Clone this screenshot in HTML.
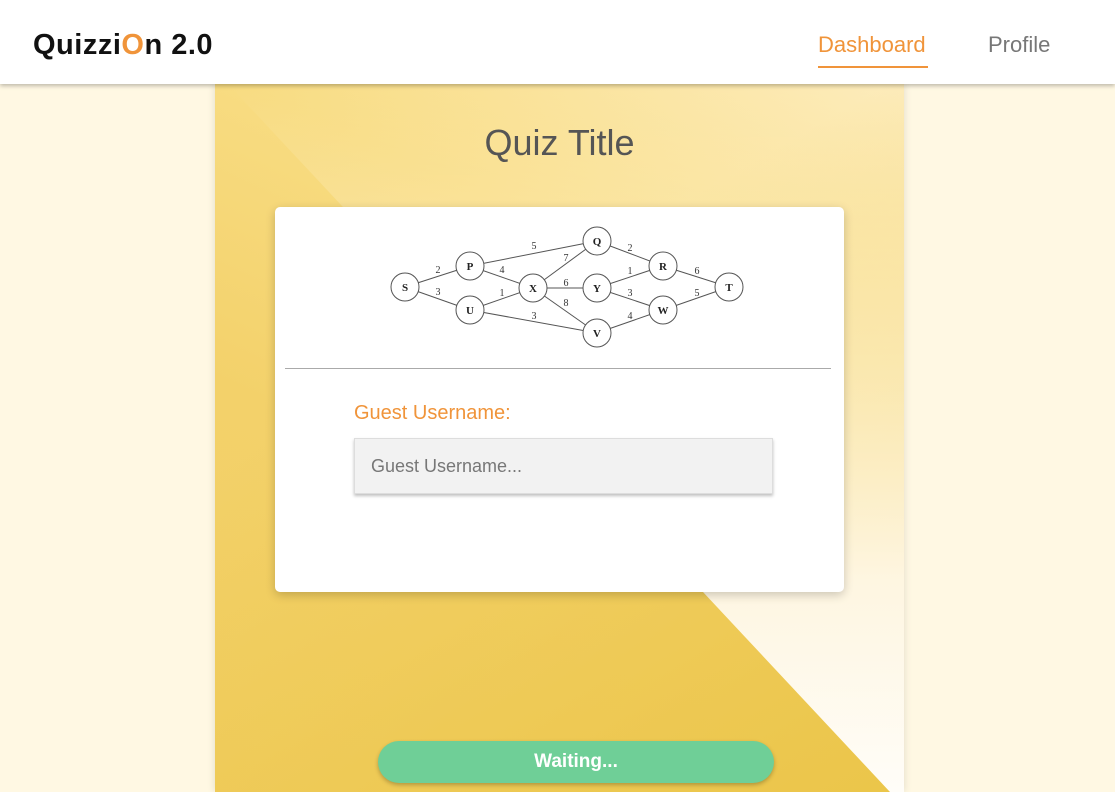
<!DOCTYPE html>
<html><head><style>
*{margin:0;padding:0;box-sizing:border-box}
body{width:1115px;height:792px;overflow:hidden;background:#fff8e3;font-family:"Liberation Sans",sans-serif;position:relative}
.nav{position:absolute;left:0;top:0;width:1115px;height:84px;background:#fff;box-shadow:0 2px 4px rgba(0,0,0,.25);z-index:5}
.logo{position:absolute;left:33px;top:29px;font-size:29px;font-weight:bold;color:#111;letter-spacing:0.5px}
.logo span{color:#f0943a}
.dash{position:absolute;left:818px;top:32px;font-size:22px;color:#f0943a}
.dash:after{content:"";position:absolute;left:0;right:-2px;top:34px;height:2px;background:#f0943a}
.prof{position:absolute;left:988px;top:32px;font-size:22px;color:#777}
.panel{position:absolute;left:215px;top:84px;width:689px;height:708px;background:linear-gradient(205deg,#fdecbc 0%,#f8dc82 30%,#f3d16a 60%,#f2cf64 100%);box-shadow:0 0 8px rgba(0,0,0,.12);overflow:hidden}
.dark{position:absolute;left:0;top:0;width:689px;height:708px;background:linear-gradient(150deg,rgba(236,198,72,0) 35%,rgba(234,196,70,.9) 100%)}
.tri{position:absolute;left:0;top:0}
h1{position:absolute;left:0;width:689px;top:38px;text-align:center;font-weight:normal;font-size:36px;color:#555}
.card{position:absolute;left:60px;top:123px;width:569px;height:385px;background:#fff;border-radius:5px;box-shadow:0 3px 10px rgba(0,0,0,.2)}
.hr{position:absolute;left:10px;right:13px;top:161px;height:1px;background:#aaa}
.lbl{position:absolute;left:79px;top:195px;font-size:20px;color:#f0943a}
.inp{position:absolute;left:79px;top:231px;width:419px;height:56px;background:#f2f2f2;border:1px solid #ddd;box-shadow:0 2px 3px rgba(0,0,0,.25);font-size:18px;color:#777;padding:17px 16px}
.btn{position:absolute;left:163px;top:657px;width:396px;height:42px;border-radius:21px;background:#6fcf97;color:#fff;font-size:19px;font-weight:bold;text-align:center;line-height:42px;box-shadow:0 2px 4px rgba(0,0,0,.25)}
</style></head><body>
<div class="nav"><div class="logo">Quizzi<span>O</span>n 2.0</div><div class="dash">Dashboard</div><div class="prof">Profile</div></div>
<div class="panel">
<div class="dark"></div>
<svg class="tri" width="689" height="708"><defs><linearGradient id="g" x1="0" y1="0" x2="0" y2="1"><stop offset="0" stop-color="#fff2cc" stop-opacity="0"/><stop offset="0.3" stop-color="#fff3d2" stop-opacity="0.5"/><stop offset="0.7" stop-color="#fff8e8" stop-opacity="0.95"/><stop offset="1" stop-color="#fffdf8"/></linearGradient></defs><polygon points="13,0 689,0 689,708 675,708" fill="url(#g)"/></svg>
<h1>Quiz Title</h1>
<div class="card">
<svg width="569" height="160" style="position:absolute;left:0;top:0" font-family="Liberation Serif" font-size="11" text-anchor="middle">
<g transform="translate(-275,-207)" stroke="#555" stroke-width="1">
<line x1="405" y1="287" x2="470" y2="266"/><line x1="405" y1="287" x2="470" y2="310"/>
<line x1="470" y1="266" x2="597" y2="241"/><line x1="470" y1="266" x2="533" y2="288"/>
<line x1="470" y1="310" x2="533" y2="288"/><line x1="470" y1="310" x2="597" y2="333"/>
<line x1="533" y1="288" x2="597" y2="241"/><line x1="533" y1="288" x2="597" y2="288"/><line x1="533" y1="288" x2="597" y2="333"/>
<line x1="597" y1="241" x2="663" y2="266"/><line x1="597" y1="288" x2="663" y2="266"/><line x1="597" y1="288" x2="663" y2="310"/>
<line x1="597" y1="333" x2="663" y2="310"/><line x1="663" y1="266" x2="729" y2="287"/><line x1="663" y1="310" x2="729" y2="287"/>
<g fill="#fff"><circle cx="405" cy="287" r="14"/><circle cx="470" cy="266" r="14"/><circle cx="470" cy="310" r="14"/><circle cx="533" cy="288" r="14"/><circle cx="597" cy="241" r="14"/><circle cx="597" cy="288" r="14"/><circle cx="597" cy="333" r="14"/><circle cx="663" cy="266" r="14"/><circle cx="663" cy="310" r="14"/><circle cx="729" cy="287" r="14"/></g>
<g fill="#222" stroke="none" font-weight="bold"><text x="405" y="291">S</text><text x="470" y="270">P</text><text x="470" y="314">U</text><text x="533" y="292">X</text><text x="597" y="245">Q</text><text x="597" y="292">Y</text><text x="597" y="337">V</text><text x="663" y="270">R</text><text x="663" y="314">W</text><text x="729" y="291">T</text></g>
<g fill="#333" stroke="none" font-size="10"><text x="438" y="273">2</text><text x="438" y="295">3</text><text x="534" y="249">5</text><text x="502" y="273">4</text><text x="502" y="296">1</text><text x="534" y="319">3</text><text x="566" y="261">7</text><text x="566" y="286">6</text><text x="566" y="306">8</text><text x="630" y="251">2</text><text x="630" y="274">1</text><text x="630" y="296">3</text><text x="630" y="319">4</text><text x="697" y="274">6</text><text x="697" y="296">5</text></g>
</g></svg>
<div class="hr"></div>
<div class="lbl">Guest Username:</div>
<div class="inp">Guest Username...</div>
</div>
<div class="btn">Waiting...</div>
</div>
</body></html>
